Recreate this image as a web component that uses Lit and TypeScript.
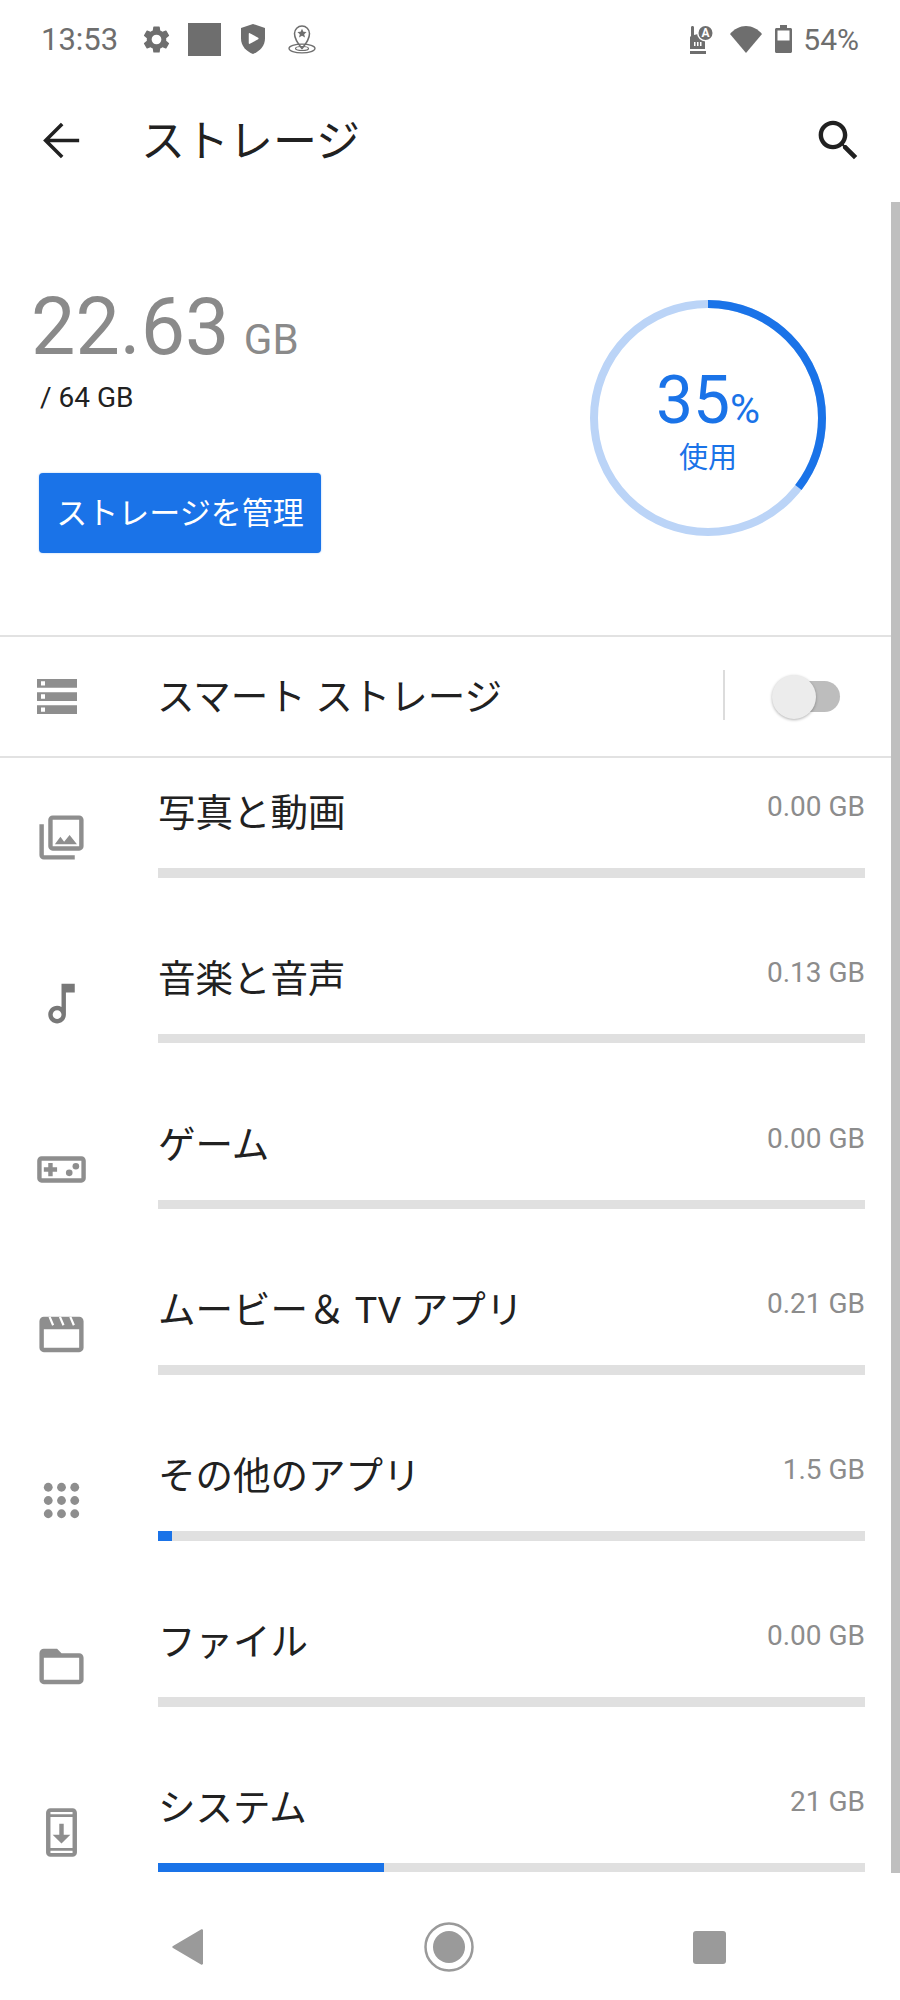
import { LitElement, html, css, svg } from 'lit';
import { customElement } from 'lit/decorators.js';

interface Row {
  label: string;
  size: string;
  pct: number;
  icon: unknown;
  dark?: boolean;
}

const rows: Row[] = [
  {
    label: '写真と動画',
    size: '0.00 GB',
    pct: 0,
    icon: svg`<path d="M20 4v12H8V4h12m0-2H8c-1.1 0-2 .9-2 2v12c0 1.1.9 2 2 2h12c1.1 0 2-.9 2-2V4c0-1.1-.9-2-2-2zm-8.5 9.67l1.69 2.26 2.48-3.1L19 15H9zM2 6v14c0 1.1.9 2 2 2h14v-2H4V6H2z"/>`,
  },
  {
    label: '音楽と音声',
    size: '0.13 GB',
    pct: 0,
    dark: true,
    icon: svg`<path d="M12 3l.01 10.55c-.59-.34-1.27-.55-2-.55C7.79 13 6 14.79 6 17s1.79 4 4 4 4-1.79 4-4V7h4V3h-6zm-1.99 16c-1.1 0-2-.9-2-2s.9-2 2-2 2 .9 2 2-.9 2-2 2z"/>`,
  },
  {
    label: 'ゲーム',
    size: '0.00 GB',
    pct: 0,
    icon: svg`<path d="M21 6H3c-1.1 0-2 .9-2 2v8c0 1.1.9 2 2 2h18c1.1 0 2-.9 2-2V8c0-1.1-.9-2-2-2zm0 10H3V8h18v8zM6 15h2v-2h2v-2H8V9H6v2H4v2h2z"/><circle cx="15.5" cy="13.5" r="1.5"/><circle cx="18.5" cy="10.5" r="1.5"/>`,
  },
  {
    label: 'ムービー＆ TV アプリ',
    size: '0.21 GB',
    pct: 0,
    icon: svg`<path fill-rule="evenodd" d="M4 4h16c1.1 0 2 .9 2 2v12c0 1.1-.9 2-2 2H4c-1.1 0-2-.9-2-2V6c0-1.1.9-2 2-2zm0 5.6V18h16V9.6H4z"/><path d="M6.6 4l1.6 3.8M11.3 4l1.6 3.8M16 4l1.6 3.8" stroke="#fff" stroke-width="1" fill="none"/>`,
  },
  {
    label: 'その他のアプリ',
    size: '1.5 GB',
    pct: 2.05,
    icon: svg`${[6, 12, 18].map((y) => [6, 12, 18].map((x) => svg`<circle cx=${x} cy=${y} r="2"/>`))}`,
  },
  {
    label: 'ファイル',
    size: '0.00 GB',
    pct: 0,
    icon: svg`<path d="M20 6h-8l-2-2H4c-1.1 0-1.99.9-1.99 2L2 18c0 1.1.9 2 2 2h16c1.1 0 2-.9 2-2V8c0-1.1-.9-2-2-2zm0 12H4V8h16v10z"/>`,
  },
  {
    label: 'システム',
    size: '21 GB',
    pct: 32,
    icon: svg`<path d="M17 1.01L7 1c-1.1 0-2 .9-2 2v18c0 1.1.9 2 2 2h10c1.1 0 2-.9 2-2V3c0-1.1-.9-1.99-2-1.99zM17 19H7V5h10v14zm-1-6h-3V8h-2v5H8l4 4 4-4z"/><path d="M7 2.7h10v1H7zM7 20.300h10v1H7z" fill="#fff"/>`,
  },
];

const RING_R = 114;
const RING_LEN = 2 * Math.PI * RING_R;

@customElement('app-root')
export class AppRoot extends LitElement {
  static styles = css`
    :host {
      display: block;
      width: 900px;
    }
    .screen {
      position: relative;
      display: flex;
      flex-direction: column;
      height: 2000px;
      overflow: hidden;
      background: #fff;
      color: #212121;
      font-family: Roboto, 'Noto Sans CJK JP', sans-serif;
    }
    .status {
      flex: none;
      display: flex;
      align-items: center;
      height: 78px;
      padding: 0 41px;
      color: #6e6e6e;
      font-size: 30px;
    }
    .status svg {
      display: block;
      fill: #6e6e6e;
    }
    .status .spacer {
      flex: 1;
    }
    .time {
      font-size: 31px;
    }
    .gear { margin-left: 25px; }
    .square { margin-left: 18px; }
    .shield { margin-left: 20px; }
    .pin { margin-left: 23px; }
    .wifi { margin-left: 16px; }
    .battery { margin-left: 13px; }
    .pct { margin-left: 11px; }

    .appbar {
      flex: none;
      display: flex;
      align-items: center;
      height: 124px;
      padding: 0 35px;
    }
    .appbar svg {
      display: block;
      width: 53px;
      height: 53px;
      fill: #212121;
    }
    .appbar h1 {
      flex: 1;
      margin: 0 0 4px 53px;
      font-size: 44px;
      font-weight: 400;
    }
    .search {
      margin-right: 0;
    }

    .summary {
      flex: none;
      display: flex;
      justify-content: space-between;
      height: 433px;
      padding: 0 72px 0 31px;
      box-sizing: border-box;
    }
    .used {
      padding-top: 85px;
    }
    .amount {
      font-size: 79px;
      line-height: 80px;
      color: #8a8a8a;
    }
    .amount span {
      margin-left: 4px;
      font-size: 42px;
    }
    .total {
      margin: 0 0 0 9px;
      font-size: 28px;
      line-height: 36px;
    }
    .manage {
      display: block;
      margin: 57px 0 0 8px;
      width: 282px;
      height: 80px;
      padding: 0 0 6px;
      border: none;
      border-radius: 4px;
      background: #1a73e8;
      color: #fff;
      font: inherit;
      font-size: 31px;
      box-shadow: 0 0 2px rgba(26, 115, 232, 0.4);
    }
    .donut {
      display: grid;
      align-self: flex-start;
      margin-top: 96px;
      width: 240px;
      height: 240px;
    }
    .donut > * {
      grid-area: 1 / 1;
    }
    .donut circle {
      fill: none;
      stroke-width: 8;
    }
    .donut .track {
      stroke: #bbd4f7;
    }
    .donut .arc {
      stroke: #1a73e8;
    }
    .donut-text {
      display: flex;
      flex-direction: column;
      align-items: center;
      justify-content: center;
      color: #1a73e8;
      padding-top: 6.5px;
    }
    .donut-num {
      font-size: 66px;
      line-height: 70px;
    }
    .donut-num span {
      font-size: 41px;
    }
    .donut-label {
      margin-top: -5.5px;
      font-size: 29px;
      line-height: 38px;
    }

    .smart {
      flex: none;
      display: flex;
      align-items: center;
      height: 119px;
      border-top: 2px solid #e2e2e2;
      border-bottom: 2px solid #e2e2e2;
      padding: 0 59px 0 37px;
    }
    .smart .server {
      display: block;
      width: 40px;
      height: 35px;
      margin-right: 80px;
      fill: #8e8e8e;
    }
    .smart .name {
      flex: 1;
      margin-bottom: 6px;
      font-size: 37.5px;
    }
    .smart .rule {
      width: 2px;
      height: 50px;
      margin-bottom: 4px;
      background: #dcdcdc;
    }
    .toggle {
      display: flex;
      align-items: center;
      margin-left: 47px;
      width: 69px;
      height: 44px;
    }
    .toggle .rail {
      width: 47px;
      height: 31px;
      margin-left: 21px;
      border-radius: 16px;
      background: #bdbdbd;
    }
    .toggle .thumb {
      flex: none;
      width: 44px;
      height: 44px;
      margin-right: -44px;
      margin-left: -68px;
      border-radius: 50%;
      background: #ececec;
      box-shadow: 0 1px 3px rgba(0, 0, 0, 0.3);
    }

    .list {
      flex: 1;
      min-height: 0;
      overflow: hidden;
    }
    .row {
      display: flex;
      height: 165.83px;
      box-sizing: border-box;
      padding-right: 35px;
    }
    .row-icon {
      flex: none;
      display: block;
      width: 53px;
      height: 53px;
      margin: 53px 69.5px 0 35px;
      fill: #8e8e8e;
    }
    .row-icon.dark {
      fill: #787878;
    }
    .row-body {
      flex: 1;
      min-width: 0;
    }
    .row-head {
      display: flex;
      justify-content: space-between;
      height: 110px;
      padding-left: 0.5px;
    }
    .row-name {
      font-size: 37.5px;
      line-height: 111px;
    }
    .row-size {
      font-size: 28px;
      line-height: 98px;
      color: #8c8c8c;
    }
    .bar {
      height: 9.5px;
      background: #e0e0e0;
    }
    .bar div {
      height: 100%;
      background: #1a73e8;
    }

    .nav {
      flex: none;
      display: flex;
      align-items: center;
      justify-content: space-between;
      height: 106px;
      padding: 0 174px 0 172px;
    }
    .nav svg {
      display: block;
      fill: #9a9a9a;
    }

    .scrollbar {
      position: absolute;
      top: 202px;
      right: 0;
      width: 9px;
      height: 1671px;
      background: #bfbfbf;
    }
  `;

  renderStatus() {
    return html`
      <div class="status">
        <span class="time">13:53</span>
        <svg class="gear" width="27" height="27" viewBox="2.5 2 19 20"><path d="M19.14 12.94c.04-.3.06-.61.06-.94s-.02-.64-.07-.94l2.03-1.58a.49.49 0 0 0 .12-.61l-1.92-3.32a.49.49 0 0 0-.59-.22l-2.39.96c-.5-.38-1.03-.7-1.62-.94l-.36-2.54a.48.48 0 0 0-.48-.41h-3.84a.47.47 0 0 0-.47.41l-.36 2.54c-.59.24-1.13.57-1.62.94l-2.39-.96a.48.48 0 0 0-.59.22L2.74 8.87c-.12.21-.08.47.12.61l2.03 1.58c-.05.3-.09.63-.09.94s.02.64.07.94l-2.03 1.58a.49.49 0 0 0-.12.61l1.92 3.32c.12.22.37.29.59.22l2.39-.96c.5.38 1.03.7 1.62.94l.36 2.54c.05.24.24.41.48.41h3.84c.24 0 .44-.17.47-.41l.36-2.54c.59-.24 1.13-.56 1.62-.94l2.39.96c.22.08.47 0 .59-.22l1.92-3.32c.12-.22.07-.47-.12-.61l-2.01-1.58zM12 15.6A3.6 3.6 0 1 1 12 8.4a3.6 3.6 0 0 1 0 7.2z"/></svg>
        <svg class="square" width="33" height="33" viewBox="0 0 33 33"><rect width="33" height="33"/></svg>
        <svg class="shield" width="24" height="30" viewBox="0 0 24 30">
          <path d="M12 0l12 4v10.5C24 22 18.5 27.5 12 30 5.500 27.500 0 22 0 14.500V4z"/>
          <path d="M8.500 9.800l8.300 4.700-8.300 4.700z" fill="#fff" stroke="#fff" stroke-width="1.500" stroke-linejoin="round"/>
        </svg>
        <svg class="pin" width="28" height="30" viewBox="0 0 28 30">
          <path d="M14 24.500C10 19.500 6.500 15.500 6.500 9.500a7.500 7.500 0 0 1 15 0c0 6-3.500 10-7.500 15z" fill="#fff" stroke="#6e6e6e" stroke-width="1.500"/>
          <path d="M14 4.800l1.400 3 3.200.3-2.400 2.100.8 3.200-3-1.700-3 1.700.8-3.200-2.400-2.100 3.200-.3z"/>
          <ellipse cx="14" cy="24.500" rx="13" ry="4.300" fill="none" stroke="#6e6e6e" stroke-width="1.300"/>
          <ellipse cx="14" cy="24.500" rx="6.500" ry="2" fill="none" stroke="#6e6e6e" stroke-width="1.200"/>
        </svg>
        <span class="spacer"></span>
        <svg width="25" height="29" viewBox="0 0 25 29">
          <path d="M2 2.500c0-1 .6-1.500 1.500-1.500S5 1.500 5 2.500V10l4-1 7 2v13H1V12l1-1z"/>
          <rect x="1" y="26" width="16" height="3"/>
          <rect x="5" y="17" width="1.500" height="4" fill="#fff"/>
          <rect x="8" y="17" width="1.500" height="4" fill="#fff"/>
          <rect x="11" y="17" width="1.500" height="4" fill="#fff"/>
          <circle cx="16.500" cy="8" r="8.500" fill="#fff"/>
          <circle cx="16.500" cy="8" r="7"/>
          <text x="16.500" y="12" text-anchor="middle" font-size="12" font-weight="700" fill="#fff">A</text>
        </svg>
        <svg class="wifi" width="32" height="27" viewBox="0 0 32 27"><path d="M0 8C4 3 10 0 16 0s12 3 16 8L16 27z"/></svg>
        <svg class="battery" width="17" height="28" viewBox="0 0 17 28">
          <path d="M5 0h7v3h3.500c.8 0 1.500.7 1.500 1.500V26.500c0 .8-.7 1.500-1.500 1.500h-14C.7 28 0 27.300 0 26.500V4.500C0 3.700.7 3 1.500 3H5z"/>
          <rect x="2.500" y="5.500" width="12" height="10" fill="#fff"/>
        </svg>
        <span class="pct">54%</span>
      </div>
    `;
  }

  renderRow(r: Row) {
    return html`
      <div class="row">
        <svg class="row-icon ${r.dark ? 'dark' : ''}" viewBox="0 0 24 24">${r.icon}</svg>
        <div class="row-body">
          <div class="row-head">
            <span class="row-name">${r.label}</span>
            <span class="row-size">${r.size}</span>
          </div>
          <div class="bar"><div style="width:${r.pct}%"></div></div>
        </div>
      </div>
    `;
  }

  render() {
    return html`
      <div class="screen">
        ${this.renderStatus()}
        <div class="appbar">
          <svg viewBox="0 0 24 24"><path d="M20 12H5.200M12.300 4.500L4.800 12l7.500 7.500" fill="none" stroke="#212121" stroke-width="1.600"/></svg>
          <h1>ストレージ</h1>
          <svg class="search" viewBox="0 0 24 24"><path d="M15.500 14h-.79l-.28-.27C15.410 12.590 16 11.110 16 9.500 16 5.910 13.090 3 9.500 3S3 5.910 3 9.500 5.910 16 9.500 16c1.610 0 3.090-.59 4.230-1.570l.27.28v.79l5 4.990L20.490 19l-4.990-5zm-6 0C7.010 14 5 11.990 5 9.500S7.010 5 9.500 5 14 7.010 14 9.500 11.990 14 9.500 14z"/></svg>
        </div>
        <div class="summary">
          <div class="used">
            <div class="amount">22.63<span> GB</span></div>
            <div class="total">/ 64 GB</div>
            <button class="manage">ストレージを管理</button>
          </div>
          <div class="donut">
            <svg width="240" height="240" viewBox="0 0 240 240">
              <circle class="track" cx="120" cy="120" r=${RING_R}></circle>
              <circle class="arc" cx="120" cy="120" r=${RING_R}
                stroke-dasharray="${RING_LEN * 0.354} ${RING_LEN}"
                transform="rotate(-90 120 120)"></circle>
            </svg>
            <div class="donut-text">
              <div class="donut-num">35<span>%</span></div>
              <div class="donut-label">使用</div>
            </div>
          </div>
        </div>
        <div class="smart">
          <svg class="server" viewBox="2 4 20 16" preserveAspectRatio="none"><path d="M2 20h20v-4H2v4zm2-3h2v2H4v-2zM2 4v4h20V4H2zm4 3H4V5h2v2zm-4 7h20v-4H2v4zm2-3h2v2H4v-2z"/></svg>
          <span class="name">スマート ストレージ</span>
          <span class="rule"></span>
          <div class="toggle">
            <div class="rail"></div>
            <div class="thumb"></div>
          </div>
        </div>
        <div class="list">${rows.map((r) => this.renderRow(r))}</div>
        <div class="nav">
          <svg width="32" height="36" viewBox="0 0 32 36"><path d="M31 1.500v33c0 1-1 1.500-2 1L1 19c-1-.5-1-1.500 0-2L29 .5c1-.5 2 0 2 1z"/></svg>
          <svg width="50" height="50" viewBox="0 0 50 50"><circle cx="25" cy="25" r="23.500" fill="none" stroke="#9a9a9a" stroke-width="2.500"/><circle cx="25" cy="25" r="16"/></svg>
          <svg width="33" height="33" viewBox="0 0 33 33"><rect width="33" height="33" rx="3"/></svg>
        </div>
        <div class="scrollbar"></div>
      </div>
    `;
  }
}
